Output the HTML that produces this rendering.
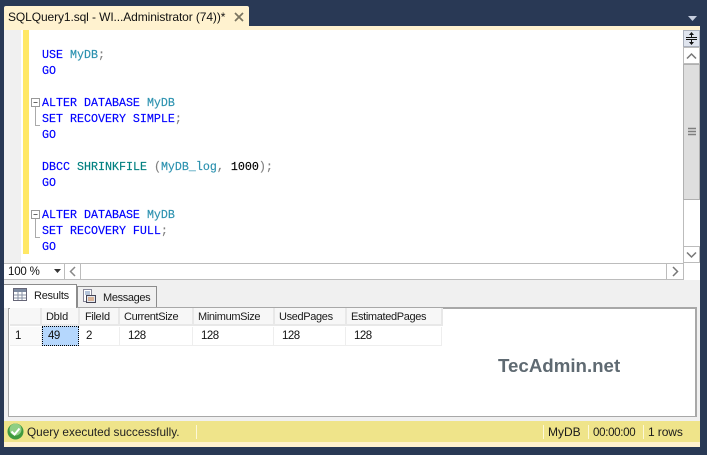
<!DOCTYPE html>
<html>
<head>
<meta charset="utf-8">
<style>
html,body{margin:0;padding:0;width:707px;height:455px;overflow:hidden;background:#293955}
*{box-sizing:border-box}
.a{position:absolute}
.code{position:absolute;font:11.67px/16px "Liberation Mono",monospace;white-space:pre;color:#0000ff;-webkit-text-stroke:0.15px}
.t{color:#2b91af}.g{color:#808080}.k{color:#000}.c{color:#008080}
.s{position:absolute;font:12px/16px "Liberation Sans",sans-serif;color:#1a1a1a;white-space:pre}
.h{position:absolute;top:308px;height:18px;background:#f7f7f7;border-right:2px solid #e8e8e8;border-bottom:2px solid #e8e8e8;font:11px/19px "Liberation Sans",sans-serif;letter-spacing:-.35px;color:#1a1a1a;padding-left:4px;white-space:pre}
.d{position:absolute;top:327px;height:19px;background:#fff;border-right:1px solid #eee;border-bottom:1px solid #eee;font:11.5px/19px "Liberation Sans",sans-serif;letter-spacing:-.5px;color:#111;padding-left:8px;white-space:pre}
.sb{position:absolute;background:#fff;border:1px solid #bcbcbc}
</style>
</head>
<body>
<div class="a" style="left:4px;top:6px;width:245px;height:21px;background:#fff2cf;border-radius:2px 2px 0 0"></div>
<div class="a" style="left:4px;top:26px;width:696px;height:4px;background:#fff2cf"></div>
<div class="s" style="left:8px;top:9px;font-size:12px;letter-spacing:-.1px;color:#111">SQLQuery1.sql - WI...Administrator (74))*</div>
<svg class="a" style="left:234px;top:12px" width="10" height="10"><path d="M1 1L9 9M9 1L1 9" stroke="#7a7460" stroke-width="1.7"/></svg>
<svg class="a" style="left:686px;top:15px" width="14" height="7"><path d="M2 1H11L6.500 6Z" fill="#c6cede"/></svg>

<div class="a" style="left:4px;top:30px;width:696px;height:250px;background:#fff"></div>
<div class="a" style="left:4px;top:30px;width:17px;height:233px;background:#f0f0f0"></div>
<div class="a" style="left:23px;top:30px;width:6px;height:224px;background:#ffe866"></div>

<div class="code" style="left:42px;top:47px">USE <span class="t">MyDB</span><span class="g">;</span>
GO

ALTER DATABASE <span class="t">MyDB</span>
SET RECOVERY SIMPLE<span class="g">;</span>
GO

DBCC <span class="c">SHRINKFILE</span> <span class="g">(</span><span class="t">MyDB_log</span><span class="g">,</span> <span class="k">1000</span><span class="g">);</span>
GO

ALTER DATABASE <span class="t">MyDB</span>
SET RECOVERY FULL<span class="g">;</span>
GO</div>

<svg class="a" style="left:30px;top:97px" width="12" height="32"><rect x="1.500" y="1.500" width="8" height="8" fill="#fff" stroke="#999"/><path d="M3.500 5.500H7.500" stroke="#666"/><path d="M5.500 10V28.500H10" stroke="#aaa" fill="none"/></svg>
<svg class="a" style="left:30px;top:209px" width="12" height="32"><rect x="1.500" y="1.500" width="8" height="8" fill="#fff" stroke="#999"/><path d="M3.500 5.500H7.500" stroke="#666"/><path d="M5.500 10V28.500H10" stroke="#aaa" fill="none"/></svg>

<!-- vertical scrollbar -->
<div class="a" style="left:684px;top:30px;width:16px;height:233px;background:#fff"></div>
<div class="sb" style="left:683px;top:30px;width:17px;height:17px;background:#dfe4ee;border-color:#aab0bc"></div>
<svg class="a" style="left:686px;top:32px" width="12" height="14"><path d="M0 5.500H11M0 7.500H11" stroke="#111"/><path d="M5.500 0L8 3H6V5H5V3H3ZM5.500 13L8 10H6V8H5V10H3Z" fill="#111"/></svg>
<div class="sb" style="left:683px;top:47px;width:17px;height:17px"></div>
<svg class="a" style="left:686px;top:52px" width="12" height="8"><path d="M1 6.500L5.500 2L10 6.500" stroke="#777" stroke-width="1.500" fill="none"/></svg>
<div class="sb" style="left:683px;top:64px;width:17px;height:136px;background:#dedede;border-color:#b0b0b0;border-width:1px 1px 1px 1px"></div>
<svg class="a" style="left:688px;top:127px" width="8" height="10"><path d="M0 1.500H8M0 4.500H8M0 7.500H8" stroke="#7f7f7f" stroke-width="1.500"/></svg>
<div class="a" style="left:683px;top:200px;width:1px;height:46px;background:#bcbcbc"></div>
<div class="a" style="left:699px;top:200px;width:1px;height:46px;background:#fff"></div>
<div class="sb" style="left:683px;top:246px;width:17px;height:17px"></div>
<svg class="a" style="left:686px;top:251px" width="12" height="8"><path d="M1 1.500L5.500 6L10 1.500" stroke="#777" stroke-width="1.500" fill="none"/></svg>

<!-- horizontal bar -->
<div class="a" style="left:4px;top:263px;width:680px;height:1px;background:#bcbcbc"></div>
<div class="a" style="left:4px;top:279px;width:680px;height:1px;background:#bcbcbc"></div>
<div class="s" style="left:8px;top:264px;font-size:11.5px;letter-spacing:-.2px;color:#111">100 %</div>
<svg class="a" style="left:54px;top:269px" width="8" height="5"><path d="M0 0H7L3.500 4Z" fill="#333"/></svg>
<div class="sb" style="left:64px;top:263px;width:17px;height:17px"></div>
<svg class="a" style="left:69px;top:266px" width="8" height="11"><path d="M6 1L1.500 5.500L6 10" stroke="#888" stroke-width="1.500" fill="none"/></svg>
<div class="sb" style="left:666px;top:263px;width:18px;height:17px"></div>
<svg class="a" style="left:671px;top:266px" width="8" height="11"><path d="M2 1L6.500 5.500L2 10" stroke="#777" stroke-width="1.500" fill="none"/></svg>

<!-- results area -->
<div class="a" style="left:4px;top:280px;width:696px;height:141px;background:#f0f0f0"></div>
<div class="a" style="left:77px;top:286px;width:80px;height:21px;background:#f0f0f0;border:1px solid #8c8c8c;border-bottom:none"></div>
<div class="a" style="left:4px;top:284px;width:73px;height:24px;background:#fff;border-top:1px solid #8c8c8c;border-right:1px solid #8c8c8c;z-index:3"></div>
<svg class="a" style="left:13px;top:288px;z-index:4" width="14" height="13"><rect x=".5" y=".5" width="13" height="12" fill="#fff" stroke="#667"/><rect x="1" y="1" width="12" height="3" fill="#7d8aa0"/><path d="M5 4V12M9 4V12M1 7H13M1 10H13" stroke="#8a93a5"/></svg>
<div class="s" style="left:34px;top:288px;z-index:4;font-size:11px;letter-spacing:-.25px">Results</div>
<svg class="a" style="left:82px;top:289px" width="15" height="15"><rect x="1.500" y=".5" width="8" height="12" fill="#fff" stroke="#889"/><path d="M3 3H8M3 5H8" stroke="#6a89b5"/><rect x="4.500" y="6.500" width="9" height="7" fill="#e4e8ef" stroke="#445"/><path d="M6 9H12M6 11H12" stroke="#d08040"/></svg>
<div class="s" style="left:103px;top:290px;font-size:11px;letter-spacing:-.35px">Messages</div>

<div class="a" style="left:8px;top:307px;width:689px;height:110px;background:#fff;border:1px solid #a8a8a8;border-right:2px solid #a8a8a8;border-top:2px solid #a8a8a8"></div>
<div class="h" style="left:10px;width:32px"></div>
<div class="h" style="left:42px;width:38px;padding-left:4px">DbId</div>
<div class="h" style="left:80px;width:40px;padding-left:5px">FileId</div>
<div class="h" style="left:120px;width:74px">CurrentSize</div>
<div class="h" style="left:194px;width:81px">MinimumSize</div>
<div class="h" style="left:275px;width:72px">UsedPages</div>
<div class="h" style="left:347px;width:96px">EstimatedPages</div>

<div class="d" style="left:10px;width:32px;background:#fafafa;padding-left:5px">1</div>
<div class="d" style="left:79px;width:41px;padding-left:7px">2</div>
<div class="d" style="left:120px;width:73px">128</div>
<div class="d" style="left:193px;width:81px">128</div>
<div class="d" style="left:274px;width:72px">128</div>
<div class="d" style="left:346px;width:96px">128</div>
<div class="d" style="left:42px;top:326px;width:37px;height:20px;background:#b5d7fd;border:1px dotted #000;line-height:18px;padding-left:5px">49</div>

<div class="a" style="left:498px;top:356px;font:bold 18.700px/20px 'Liberation Sans',sans-serif;color:#5f6a72;white-space:pre">TecAdmin.net</div>

<!-- status bar -->
<div class="a" style="left:4px;top:419px;width:696px;height:2px;background:#f0f0f0"></div>
<div class="a" style="left:4px;top:421px;width:696px;height:21px;background:#efe48a"></div>
<div class="a" style="left:4px;top:442px;width:696px;height:5px;background:#fff2cf"></div>
<svg class="a" style="left:7px;top:423px" width="17" height="17"><circle cx="8.500" cy="8.500" r="8" fill="#3f9a3f"/><circle cx="8.500" cy="6.500" r="6" fill="#8fcf84"/><path d="M4.500 8.500L7.500 11.500L12.500 5.500" stroke="#fff" stroke-width="2" fill="none"/></svg>
<div class="s" style="left:27px;top:424px;color:#222;font-size:11.8px">Query executed successfully.</div>
<div class="a" style="left:196px;top:425px;width:1px;height:14px;background:#fdf8d8"></div>
<div class="a" style="left:543px;top:425px;width:1px;height:14px;background:#fdf8d8"></div>
<div class="a" style="left:588px;top:425px;width:1px;height:14px;background:#fdf8d8"></div>
<div class="a" style="left:643px;top:425px;width:1px;height:14px;background:#fdf8d8"></div>
<div class="s" style="left:548px;top:424px;font-size:12px">MyDB</div>
<div class="s" style="left:593px;top:425px;font-size:11.5px;letter-spacing:-.3px">00:00:00</div>
<div class="s" style="left:648px;top:424px;font-size:12px;letter-spacing:-.1px">1 rows</div>
</body>
</html>
